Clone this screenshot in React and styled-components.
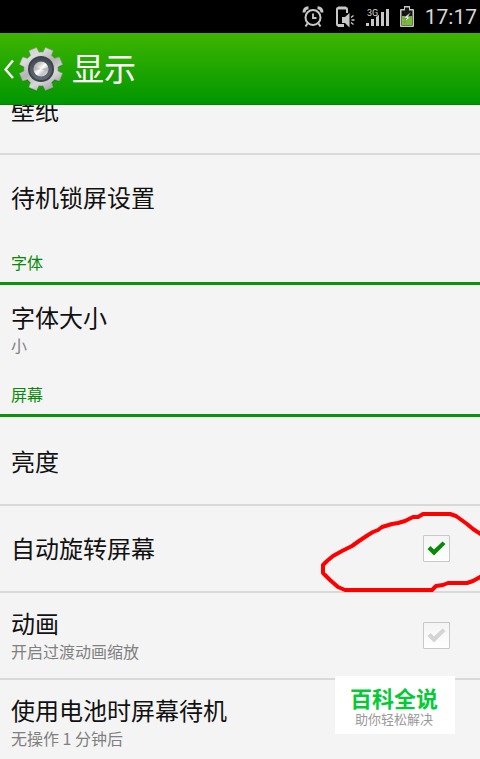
import React, { useState } from "react";
import styled, { createGlobalStyle } from "styled-components";

const GEAR_TEETH = 8;

function gearPath(cx, cy, outer, root) {
  const step = (Math.PI * 2) / GEAR_TEETH;
  const point = (radius, angle) =>
    `${(cx + radius * Math.cos(angle)).toFixed(2)} ${(cy + radius * Math.sin(angle)).toFixed(2)}`;
  let path = "";
  for (let i = 0; i < GEAR_TEETH; i++) {
    const a = step * (i + 0.5);
    path += `${i === 0 ? "M" : "L"}${point(root, a - 0.27)}`;
    path += `L${point(outer, a - 0.19)}L${point(outer, a + 0.19)}L${point(root, a + 0.27)}`;
    path += `A${root} ${root} 0 0 1 ${point(root, a + step - 0.27)}`;
  }
  return path + "Z";
}

function AlarmIcon() {
  return (
    <svg width="22" height="22" viewBox="0 0 22 22" fill="none" stroke="#c8c8c8" strokeWidth="2">
      <circle cx="11" cy="11.5" r="7.5" />
      <path d="M11 7.5v4.5h3.5" strokeWidth="1.8" />
      <path d="M2 6.500C2 3.500 3.500 2 6.500 1.800M20 6.500C20 3.500 18.500 2 15.500 1.800" strokeWidth="3" />
      <path d="M5.5 17.5L3.5 20.5M16.5 17.5l2 3" />
    </svg>
  );
}

function SilentIcon() {
  return (
    <svg width="20" height="22" viewBox="0 0 20 22" fill="none" stroke="#c8c8c8">
      <path d="M12 7V3Q12 2 11 2H3Q2 2 2 3V18Q2 19.5 3 19.5H9" strokeWidth="2" />
      <path d="M3 2h8M3 19.500h6" strokeWidth="3" />
      <path d="M7 11h3L14.500 7v14.500l-4.500-4.500H7z" fill="#c8c8c8" stroke="none" />
      <path d="M16 11.500l2.500-2M16.500 14h3M16 16.500l2.500 2" strokeWidth="1.4" />
    </svg>
  );
}

function SignalIcon() {
  return (
    <svg width="23" height="18" viewBox="0 0 23 18" fill="#c8c8c8">
      <path d="M0 15h3v3H0zM5 11h3v7H5zM10 7h3v11h-3zM15 4h3v14h-3zM20 1h3v17h-3z" />
      <text
        x="1"
        y="8"
        fontFamily="Roboto, sans-serif"
        fontSize="9"
        fill="#d8d8d8"
        stroke="#000"
        strokeWidth="1.5"
        paintOrder="stroke"
      >
        3G
      </text>
    </svg>
  );
}

function BatteryIcon() {
  return (
    <svg width="14" height="22" viewBox="0 0 14 22">
      <path d="M4 0h6v3h3q1 0 1 1v16q0 1-1 1H1q-1 0-1-1V4q0-1 1-1h3z" fill="#c8c8c8" />
      <path d="M5 1.500h4v3H5zM1.500 4.500h11v15h-11z" fill="#161616" />
      <path d="M2 10h10v9H2z" fill="#76c030" />
      <path d="M10.500 6.500L3.500 12h3L4.500 16.500l6-5.500H8z" fill="#e8e8e8" stroke="#444" strokeWidth="0.4" />
    </svg>
  );
}

function GearIcon() {
  return (
    <svg width="46" height="46" viewBox="0 0 46 46">
      <defs>
        <linearGradient id="gear-body" x1="0.1" y1="0" x2="0.7" y2="1">
          <stop offset="0" stopColor="#c8c8c8" />
          <stop offset="0.25" stopColor="#dcdcdc" />
          <stop offset="0.5" stopColor="#b4b4b4" />
          <stop offset="0.75" stopColor="#d8d8d8" />
          <stop offset="1" stopColor="#a4a4a4" />
        </linearGradient>
        <linearGradient id="gear-ring" x1="0" y1="0" x2="0" y2="1">
          <stop offset="0" stopColor="#424a54" />
          <stop offset="1" stopColor="#636b75" />
        </linearGradient>
        <linearGradient id="gear-knob" x1="0" y1="0" x2="1" y2="1">
          <stop offset="0" stopColor="#a4a4a4" />
          <stop offset="0.3" stopColor="#cccccc" />
          <stop offset="0.5" stopColor="#ffffff" />
          <stop offset="0.7" stopColor="#c4c4c4" />
          <stop offset="1" stopColor="#e0e0e0" />
        </linearGradient>
      </defs>
      <path d={gearPath(23, 24, 22, 17)} fill="#055c05" opacity="0.5" />
      <path
        d={gearPath(23, 23, 22, 17)}
        fill="url(#gear-body)"
        stroke="#949a90"
        strokeWidth="0.6"
        strokeLinejoin="round"
      />
      <circle cx="23" cy="23" r="13" fill="#3c434c" />
      <circle cx="23" cy="23" r="11" fill="url(#gear-ring)" />
      <circle cx="23" cy="23" r="7.5" fill="url(#gear-knob)" />
      <path d="M23 23L30 21V26Z" fill="#9a9a9a" opacity="0.4" />
      <path d="M23 23L16 20V25Z" fill="#9a9a9a" opacity="0.4" />
    </svg>
  );
}

function CheckMark({ muted }) {
  return (
    <svg width="19" height="15" viewBox="0 0 19 15">
      <path d="M0.5 8L3.5 5L7 8.5L15.500 0.5L18.500 3L7 14.500Z" fill={muted ? "#d4d4d4" : "#078a07"} />
    </svg>
  );
}

function HandCircle() {
  return (
    <Scribble width="160" height="85" viewBox="0 0 160 85" aria-hidden="true">
      <path
        d="M162 24L153 18L147 13L136 5L130 3H103L98 6H93L85 10L78 12L72 13L62 16L58 19L53 21L48 24L39 30L32 35L22 40L13 45L7 50L3 54V62L10 69L18 76L25 79H112L116 75L123 74L128 72H147L153 70L162 65"
        fill="none"
        stroke="#fe0000"
        strokeWidth="4"
        strokeLinejoin="round"
      />
    </Scribble>
  );
}

function SettingRow({ title, summary }) {
  return (
    <Row as="button" type="button">
      <RowText>
        <Title>{title}</Title>
        {summary && <Summary>{summary}</Summary>}
      </RowText>
    </Row>
  );
}

function CheckRow({ title, summary, checked, onChange, muted, children }) {
  return (
    <Row as="label">
      <RowText>
        <Title>{title}</Title>
        {summary && <Summary>{summary}</Summary>}
      </RowText>
      <CheckBox>
        <input type="checkbox" checked={checked} onChange={onChange} />
        {(checked || muted) && <CheckMark muted={!checked} />}
      </CheckBox>
      {children}
    </Row>
  );
}

export default function App() {
  const [rotate, setRotate] = useState(true);
  const [animation, setAnimation] = useState(false);

  return (
    <Screen>
      <GlobalStyle />
      <StatusBar>
        <AlarmIcon />
        <SilentIcon />
        <SignalIcon />
        <BatteryIcon />
        <Clock>17:17</Clock>
      </StatusBar>
      <Header>
        <BackButton type="button" aria-label="返回">
          <svg width="10" height="20" viewBox="0 0 10 20" fill="none" stroke="#fff" strokeWidth="2.400">
            <path d="M9 1.500L1.500 10.500L9 19" />
          </svg>
          <GearIcon />
        </BackButton>
        <h1>显示</h1>
      </Header>
      <Scroller>
        <List>
          <Section>
            <SettingRow title="壁纸" />
            <SettingRow title="待机锁屏设置" />
          </Section>
          <SectionTitle>字体</SectionTitle>
          <Section $titled>
            <SettingRow title="字体大小" summary="小" />
          </Section>
          <SectionTitle>屏幕</SectionTitle>
          <Section $titled>
            <SettingRow title="亮度" />
            <CheckRow title="自动旋转屏幕" checked={rotate} onChange={() => setRotate(!rotate)}>
              <HandCircle />
            </CheckRow>
            <CheckRow
              title="动画"
              summary="开启过渡动画缩放"
              checked={animation}
              onChange={() => setAnimation(!animation)}
              muted
            />
            <SettingRow title="使用电池时屏幕待机" summary="无操作 1 分钟后" />
          </Section>
        </List>
      </Scroller>
      <Badge>
        <strong>百科全说</strong>
        <span>助你轻松解决</span>
      </Badge>
    </Screen>
  );
}

const GlobalStyle = createGlobalStyle`
  * {
    box-sizing: border-box;
  }
  body {
    margin: 0;
    background: #f4f4f4;
    font-family: "Noto Sans CJK SC", sans-serif;
  }
  svg {
    display: block;
    flex-shrink: 0;
  }
`;

const Screen = styled.div`
  position: relative;
  display: flex;
  flex-direction: column;
  height: 100vh;
  overflow: hidden;
`;

const StatusBar = styled.div`
  display: flex;
  flex-shrink: 0;
  align-items: center;
  justify-content: flex-end;
  gap: 11px;
  height: 33px;
  padding-right: 3px;
  background: #000;
`;

const Clock = styled.time`
  color: #d8d8d8;
  font-family: Roboto, sans-serif;
  font-size: 21px;
  line-height: 24px;
`;

const Header = styled.header`
  display: flex;
  flex-shrink: 0;
  align-items: center;
  gap: 8px;
  height: 72px;
  padding-left: 4px;
  background: linear-gradient(#3fb500, #009600);
  border-bottom: 1px solid #078207;
  h1 {
    margin: 0;
    padding-bottom: 4px;
    color: #fff;
    font-size: 32px;
    font-weight: 400;
    line-height: 40px;
  }
`;

const BackButton = styled.button`
  display: flex;
  align-items: center;
  gap: 4px;
  padding: 0;
  border: 0;
  background: none;
`;

const Scroller = styled.main`
  flex: 1;
  min-height: 0;
  overflow: hidden;
`;

/* the list is scrolled a little, the first row sits half under the header */
const List = styled.div`
  margin-top: -37px;
`;

const Section = styled.section`
  padding-top: ${(props) => (props.$titled ? "2px" : "0")};
`;

const SectionTitle = styled.h2`
  height: 45px;
  margin: 0;
  padding: 10px 11px 0;
  border-bottom: 3px solid #0a940a;
  color: #078a07;
  font-size: 16px;
  font-weight: 400;
  line-height: 24px;
`;

const Row = styled.div`
  position: relative;
  display: flex;
  align-items: center;
  width: 100%;
  min-height: 85px;
  padding: 0 30px 0 11px;
  border: 0;
  background: none;
  color: #111;
  font-family: inherit;
  text-align: left;
  & + & {
    min-height: 87px;
    border-top: 2px solid #d9d9d9;
  }
`;

const RowText = styled.span`
  display: flex;
  flex: 1;
  flex-direction: column;
  padding-bottom: 2px;
`;

const Title = styled.span`
  font-size: 24px;
  line-height: 32px;
`;

const Summary = styled.span`
  color: #808080;
  font-size: 16px;
  line-height: 24px;
`;

const CheckBox = styled.span`
  display: grid;
  place-items: center;
  width: 27px;
  height: 27px;
  border: 1px solid #c8c8c8;
  border-radius: 1px;
  background: linear-gradient(#f4f4f4, #fff);
  input {
    grid-area: 1 / 1;
    width: 100%;
    height: 100%;
    margin: 0;
    appearance: none;
  }
  svg {
    grid-area: 1 / 1;
    pointer-events: none;
  }
`;

const Scribble = styled.svg`
  position: absolute;
  top: 5px;
  right: 0;
  z-index: 1;
  pointer-events: none;
`;

const Badge = styled.aside`
  position: absolute;
  right: 25px;
  bottom: 25px;
  display: flex;
  flex-direction: column;
  align-items: center;
  padding: 8px 17px 7px 15px;
  background: #fff;
  strong {
    color: #04cb35;
    font-size: 22px;
    font-weight: 700;
    line-height: 27px;
  }
  span {
    color: #999;
    font-size: 13px;
    line-height: 16px;
  }
`;
